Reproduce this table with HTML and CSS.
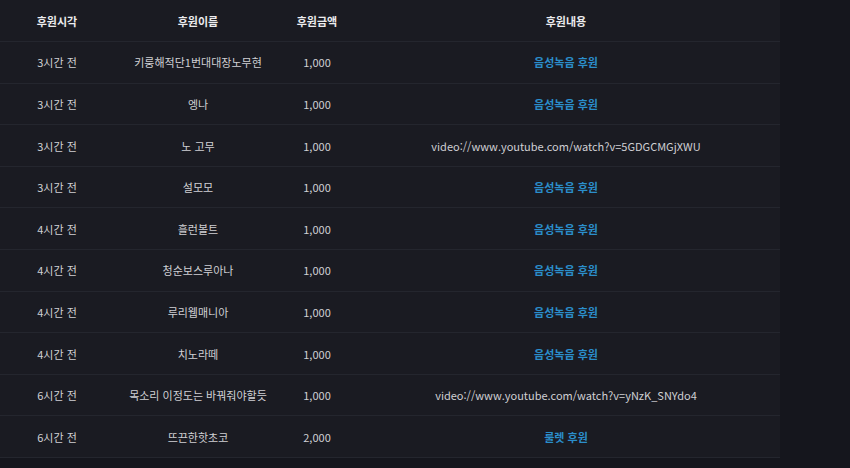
FILE: index.html
```html
<!DOCTYPE html>
<html lang="ko">
<head>
<meta charset="utf-8">
<title>후원 내역</title>
<link rel="stylesheet" href="styles.css">
</head>
<body>
<div class="wrap">
<table class="donations">
  <colgroup>
    <col class="c-time"><col class="c-name"><col class="c-amount"><col class="c-content">
  </colgroup>
  <thead>
    <tr><th>후원시각</th><th>후원이름</th><th>후원금액</th><th>후원내용</th></tr>
  </thead>
  <tbody>
    <tr><td>3시간 전</td><td>키룽해적단1번대대장노무현</td><td>1,000</td><td class="link">음성녹음 후원</td></tr>
    <tr><td>3시간 전</td><td>엥나</td><td>1,000</td><td class="link">음성녹음 후원</td></tr>
    <tr><td>3시간 전</td><td>노 고무</td><td>1,000</td><td>video://www.youtube.com/watch?v=5GDGCMGjXWU</td></tr>
    <tr><td>3시간 전</td><td>설모모</td><td>1,000</td><td class="link">음성녹음 후원</td></tr>
    <tr><td>4시간 전</td><td>흘런볼트</td><td>1,000</td><td class="link">음성녹음 후원</td></tr>
    <tr><td>4시간 전</td><td>청순보스루아나</td><td>1,000</td><td class="link">음성녹음 후원</td></tr>
    <tr><td>4시간 전</td><td>루리웹매니아</td><td>1,000</td><td class="link">음성녹음 후원</td></tr>
    <tr><td>4시간 전</td><td>치노라떼</td><td>1,000</td><td class="link">음성녹음 후원</td></tr>
    <tr><td>6시간 전</td><td>목소리 이정도는 바꿔줘야할듯</td><td>1,000</td><td>video://www.youtube.com/watch?v=yNzK_SNYdo4</td></tr>
    <tr><td>6시간 전</td><td>뜨끈한핫초코</td><td>2,000</td><td class="link">룰렛 후원</td></tr>
  </tbody>
</table>
</div>
</body>
</html>
```
FILE: styles.css
```css
html, body {
  margin: 0;
  padding: 0;
  background: #15161d;
}
body {
  font-family: "Noto Sans CJK KR", "Noto Sans", sans-serif;
  font-size: 11px;
  color: #d0d0d4;
}
.wrap {
  width: 780px;
  background: #1a1b22;
}
.donations {
  width: 780px;
  border-collapse: collapse;
  table-layout: fixed;
}
.c-time { width: 114px; }
.c-name { width: 168px; }
.c-amount { width: 70px; }
.c-content { width: 428px; }
.donations th,
.donations td {
  height: 41.6px;
  box-sizing: border-box;
  padding: 0;
  text-align: center;
  vertical-align: middle;
  border-bottom: 1px solid #24262e;
  white-space: nowrap;
  line-height: 16px;
}
.donations th {
  color: #ececee;
  font-weight: 700;
  font-size: 11px;
}
.donations td.link {
  color: #2b8ecb;
  font-weight: 700;
}
```
